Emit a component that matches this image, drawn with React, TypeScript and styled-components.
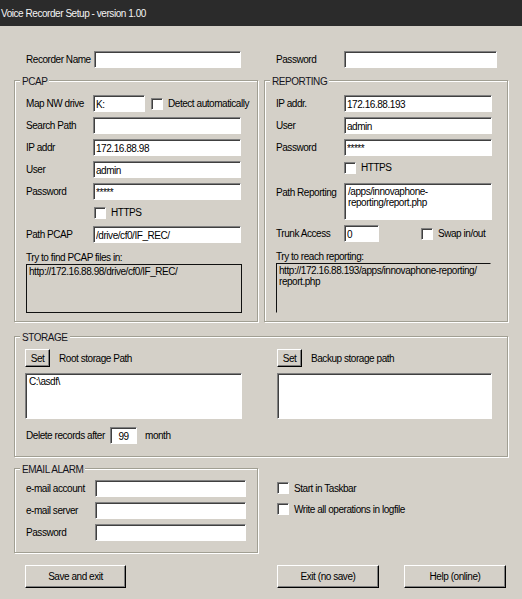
import React from 'react';
import styled, { createGlobalStyle } from 'styled-components';

const GlobalStyle = createGlobalStyle`
  html, body {
    margin: 0;
    padding: 0;
    background: #d4d0c8;
  }
  body {
    font-family: "Liberation Sans", Arial, sans-serif;
    font-size: 10px;
    letter-spacing: -0.45px;
    color: #000;
  }
  * {
    box-sizing: border-box;
  }
`;

const Window = styled.div`
  width: 522px;
  height: 599px;
  background: #d4d0c8;
  overflow: hidden;
`;

const TitleBar = styled.div`
  height: 26px;
  background: #2b2b2b;
  color: #f4f4f4;
  display: flex;
  align-items: center;
  padding-left: 1px;
  font-size: 10px;
`;

const Body = styled.div`
  padding: 25px 14px 0;
`;

const Split = styled.div<{ $mt?: number; $single?: boolean }>`
  display: ${({ $single }) => ($single ? 'block' : 'grid')};
  grid-template-columns: 244px 244px;
  column-gap: 6px;
  margin-top: ${({ $mt }) => $mt ?? 0}px;
`;

const Half = styled.div<{ $pl?: number; $pt?: number }>`
  padding-left: ${({ $pl }) => $pl ?? 0}px;
  padding-top: ${({ $pt }) => $pt ?? 0}px;
`;

const Group = styled.div<{ $pt: number; $pb: number; $pl?: number }>`
  position: relative;
  border: 1px solid #a19f93;
  box-shadow: 1px 1px 0 #ffffff, inset 1px 1px 0 #ffffff;
  padding: ${({ $pt, $pb, $pl }) => `${$pt}px 0 ${$pb}px ${$pl ?? 11}px`};
`;

const Legend = styled.span`
  position: absolute;
  top: -5px;
  left: 5px;
  padding: 0 2px;
  line-height: 11px;
  background: #d4d0c8;
  color: #141420;
`;

const Stack = styled.div<{ $gap?: number }>`
  display: flex;
  flex-direction: column;
  gap: ${({ $gap }) => $gap ?? 5}px;
`;

const Row = styled.div<{ $top?: boolean }>`
  display: flex;
  align-items: ${({ $top }) => ($top ? 'flex-start' : 'center')};
  min-height: 17px;
`;

const Label = styled.span<{ $w: number; $pt?: number }>`
  width: ${({ $w }) => $w}px;
  flex: none;
  padding-top: ${({ $pt }) => $pt ?? 0}px;
  white-space: nowrap;
`;

const Input = styled.input<{ $w: number; $center?: boolean }>`
  width: ${({ $w }) => $w}px;
  height: 17px;
  margin: 0;
  padding: 1px 2px 0;
  border: 1px solid;
  border-color: #808080 #ffffff #ffffff #808080;
  box-shadow: inset 1px 1px 0 #404040;
  background: #fff;
  font: inherit;
  letter-spacing: inherit;
  color: #000;
  outline: none;
  text-align: ${({ $center }) => ($center ? 'center' : 'left')};
`;

const TextBox = styled.div<{ $w: number; $h: number }>`
  width: ${({ $w }) => $w}px;
  height: ${({ $h }) => $h}px;
  padding: 2px 2px 0 3px;
  border: 1px solid;
  border-color: #808080 #ffffff #ffffff #808080;
  box-shadow: inset 1px 1px 0 #404040;
  background: #fff;
  line-height: 11px;
  white-space: pre-line;
`;

const CheckRow = styled.div<{ $h: number; $pt?: number; $ml?: number }>`
  display: flex;
  align-items: flex-start;
  height: ${({ $h }) => $h}px;
  padding-top: ${({ $pt }) => $pt ?? 0}px;
  margin-left: ${({ $ml }) => $ml ?? 0}px;
  line-height: 12px;
`;

const Check = styled.span<{ $ml?: number }>`
  width: 12px;
  height: 12px;
  flex: none;
  margin-left: ${({ $ml }) => $ml ?? 0}px;
  margin-right: 5px;
  background: #fff;
  border: 1px solid;
  border-color: #808080 #ffffff #ffffff #808080;
  box-shadow: inset 1px 1px 0 #404040;
`;

const Caption = styled.div`
  margin-top: 9px;
  line-height: 12px;
`;

const InfoBox = styled.div<{ $w: number; $h: number; $open?: boolean }>`
  width: ${({ $w }) => $w}px;
  height: ${({ $h }) => $h}px;
  border: 1px solid #101010;
  border-right-color: ${({ $open }) => ($open ? 'transparent' : '#101010')};
  border-bottom-color: ${({ $open }) => ($open ? 'transparent' : '#101010')};
  padding: 1px 2px 0 2px;
  line-height: 11px;
  white-space: pre-line;
`;

const Button = styled.button<{ $w: number; $h: number }>`
  width: ${({ $w }) => $w}px;
  height: ${({ $h }) => $h}px;
  margin: 0;
  padding: 0;
  background: #d4d0c8;
  border: 1px solid;
  border-color: #ffffff #000000 #000000 #ffffff;
  box-shadow: inset -1px -1px 0 #808080;
  font: inherit;
  letter-spacing: inherit;
  color: #000;
`;

const StorageGrid = styled.div`
  display: grid;
  grid-template-columns: 217px 215px;
  column-gap: 35px;
`;

const PathHead = styled.div`
  display: flex;
  align-items: center;
  gap: 9px;
  margin-bottom: 6px;
`;

const DeleteRow = styled.div`
  display: flex;
  align-items: center;
  margin-top: 8px;
  padding-left: 1px;
`;

const Unit = styled.span`
  margin-left: 8px;
`;

const ButtonBar = styled.div<{ $pl: number }>`
  display: flex;
  gap: 25px;
  padding-left: ${({ $pl }) => $pl}px;
`;

const OptionList = styled.div`
  display: flex;
  flex-direction: column;
  gap: 9px;
  padding: 14px 0 0 13px;
`;

const Option = styled.div`
  display: flex;
  align-items: center;
  height: 12px;
`;

const App: React.FC = () => {
  return (
    <Window>
      <GlobalStyle />
      <TitleBar>Voice Recorder Setup - version 1.00</TitleBar>
      <Body>
        <Split>
          <Half $pl={12}>
            <Row>
              <Label $w={68}>Recorder Name</Label>
              <Input $w={147} readOnly value="" />
            </Row>
          </Half>
          <Half $pl={12}>
            <Row>
              <Label $w={68}>Password</Label>
              <Input $w={153} readOnly value="" />
            </Row>
          </Half>
        </Split>

        <Split $mt={12}>
          <Group $pt={14} $pb={8}>
            <Legend>PCAP</Legend>
            <Stack>
              <Row>
                <Label $w={67}>Map NW drive</Label>
                <Input $w={52} readOnly value="K:" />
                <Check $ml={6} />
                <span>Detect automatically</span>
              </Row>
              <Row>
                <Label $w={67}>Search Path</Label>
                <Input $w={148} readOnly value="" />
              </Row>
              <Row>
                <Label $w={67}>IP addr</Label>
                <Input $w={148} readOnly value="172.16.88.98" />
              </Row>
              <Row>
                <Label $w={67}>User</Label>
                <Input $w={148} readOnly value="admin" />
              </Row>
              <Row>
                <Label $w={67}>Password</Label>
                <Input $w={148} readOnly value="*****" />
              </Row>
              <CheckRow $h={16} $pt={2} $ml={68}>
                <Check />
                <span>HTTPS</span>
              </CheckRow>
              <Row>
                <Label $w={67}>Path PCAP</Label>
                <Input $w={148} readOnly value="/drive/cf0/IF_REC/" />
              </Row>
            </Stack>
            <Caption>Try to find PCAP files in:</Caption>
            <InfoBox $w={216} $h={49}>http://172.16.88.98/drive/cf0/IF_REC/</InfoBox>
          </Group>

          <Group $pt={14} $pb={8}>
            <Legend>REPORTING</Legend>
            <Stack>
              <Row>
                <Label $w={68}>IP addr.</Label>
                <Input $w={148} readOnly value="172.16.88.193" />
              </Row>
              <Row>
                <Label $w={68}>User</Label>
                <Input $w={148} readOnly value="admin" />
              </Row>
              <Row>
                <Label $w={68}>Password</Label>
                <Input $w={148} readOnly value="*****" />
              </Row>
              <CheckRow $h={17} $pt={1} $ml={68}>
                <Check />
                <span>HTTPS</span>
              </CheckRow>
              <Row $top>
                <Label $w={68} $pt={4}>Path Reporting</Label>
                <TextBox $w={148} $h={37}>{'/apps/innovaphone-\nreporting/report.php'}</TextBox>
              </Row>
              <Row>
                <Label $w={68}>Trunk Access</Label>
                <Input $w={35} readOnly value="0" />
                <Check $ml={42} />
                <span>Swap in/out</span>
              </Row>
            </Stack>
            <Caption>Try to reach reporting:</Caption>
            <InfoBox $w={215} $h={50} $open>
              {'http://172.16.88.193/apps/innovaphone-reporting/\nreport.php'}
            </InfoBox>
          </Group>
        </Split>

        <Split $mt={14} $single>
          <Group $pt={12} $pb={12} $pl={10}>
            <Legend>STORAGE</Legend>
            <StorageGrid>
              <div>
                <PathHead>
                  <Button $w={25} $h={18}>Set</Button>
                  <span>Root storage Path</span>
                </PathHead>
                <TextBox $w={217} $h={46}>{'C:\\asdf\\'}</TextBox>
                <DeleteRow>
                  <Label $w={84}>Delete records after</Label>
                  <Input $w={27} $center readOnly value="99" />
                  <Unit>month</Unit>
                </DeleteRow>
              </div>
              <div>
                <PathHead>
                  <Button $w={25} $h={18}>Set</Button>
                  <span>Backup storage path</span>
                </PathHead>
                <TextBox $w={215} $h={46} />
              </div>
            </StorageGrid>
          </Group>
        </Split>

        <Split $mt={11}>
          <Group $pt={11} $pb={11}>
            <Legend>EMAIL ALARM</Legend>
            <Stack>
              <Row>
                <Label $w={69}>e-mail account</Label>
                <Input $w={151} readOnly value="" />
              </Row>
              <Row>
                <Label $w={69}>e-mail server</Label>
                <Input $w={151} readOnly value="" />
              </Row>
              <Row>
                <Label $w={69}>Password</Label>
                <Input $w={151} readOnly value="" />
              </Row>
            </Stack>
          </Group>
          <OptionList>
            <Option>
              <Check />
              <span>Start in Taskbar</span>
            </Option>
            <Option>
              <Check />
              <span>Write all operations in logfile</span>
            </Option>
          </OptionList>
        </Split>

        <Split $mt={12}>
          <ButtonBar $pl={11}>
            <Button $w={101} $h={23}>Save and exit</Button>
          </ButtonBar>
          <ButtonBar $pl={13}>
            <Button $w={102} $h={23}>Exit (no save)</Button>
            <Button $w={102} $h={23}>Help (online)</Button>
          </ButtonBar>
        </Split>
      </Body>
    </Window>
  );
};

export default App;
